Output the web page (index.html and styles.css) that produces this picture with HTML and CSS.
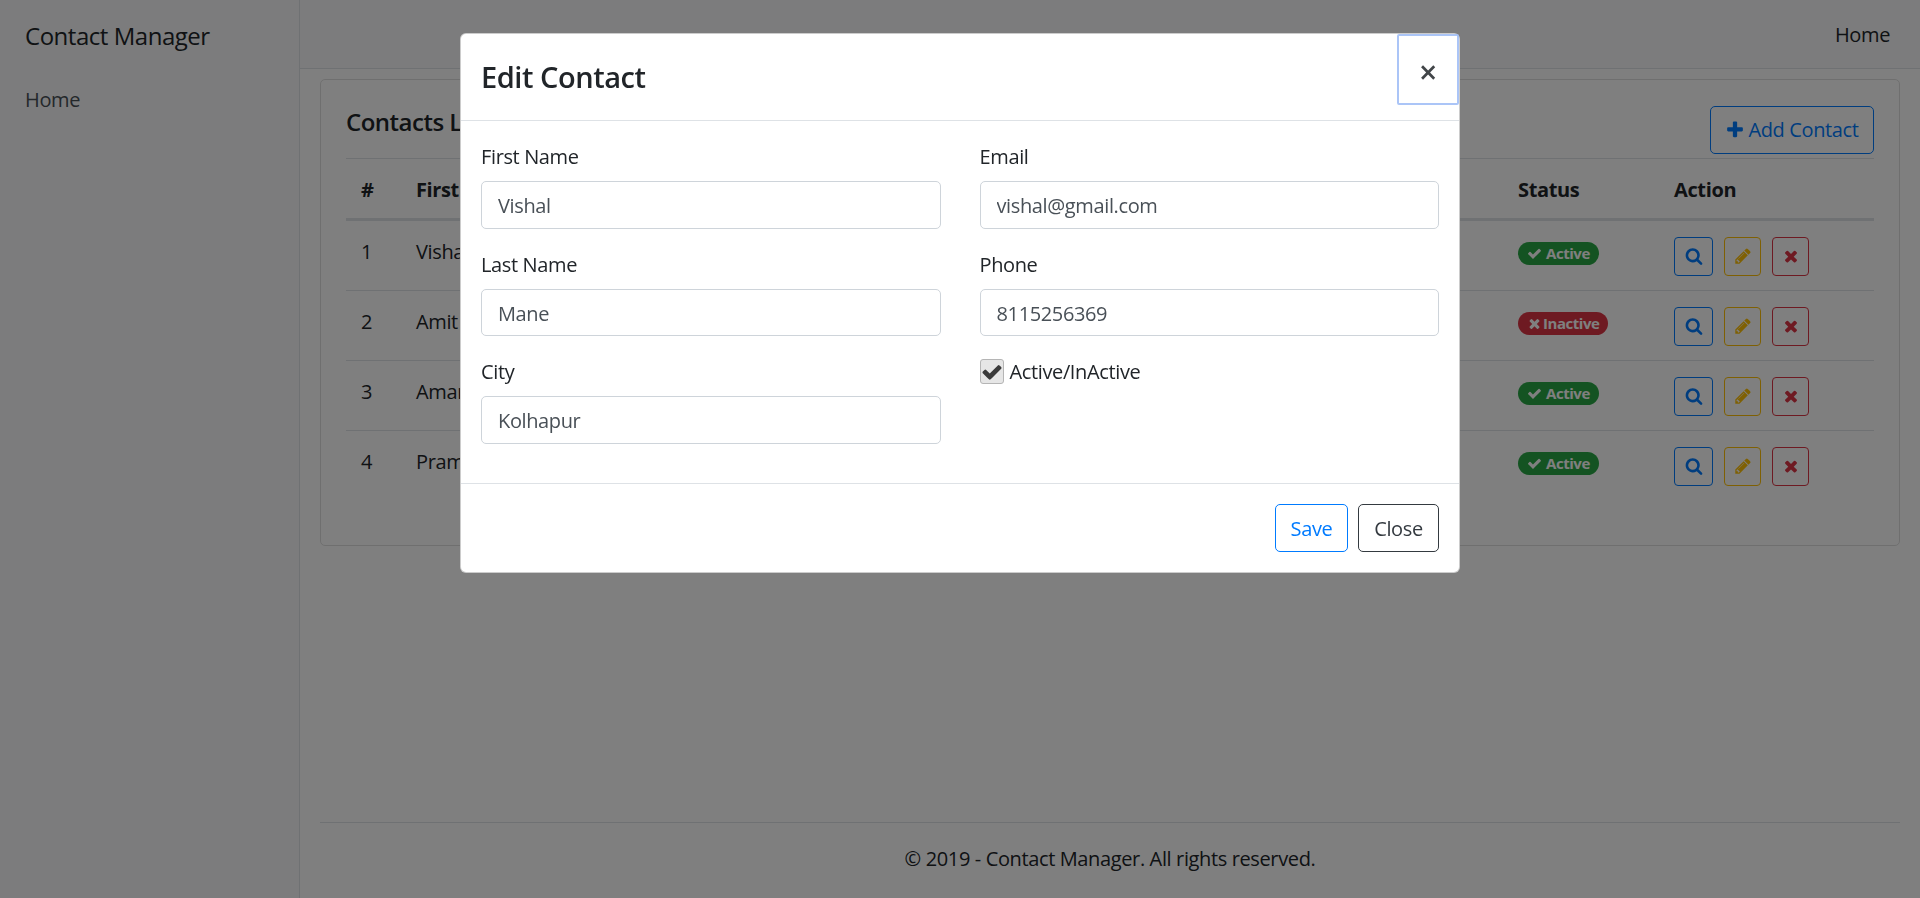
FILE: index.html
```html
<!DOCTYPE html>
<html lang="en">
<head>
<meta charset="utf-8">
<title>Contact Manager</title>
<link rel="stylesheet" href="styles.css">
</head>
<body>
<div class="app">
  <aside class="sidebar">
    <div class="brand">Contact Manager</div>
    <a class="side-link">Home</a>
  </aside>
  <div class="main">
    <header class="topbar"><a class="top-link">Home</a></header>
    <section class="card">
      <div class="card-head">
        <h4 class="card-title">Contacts List</h4>
        <button class="btn btn-add"><svg class="ico ico-plus" viewBox="0 0 1792 1792"><path d="M1600 736v192q0 40-28 68t-68 28h-416v416q0 40-28 68t-68 28h-192q-40 0-68-28t-28-68v-416h-416q-40 0-68-28t-28-68v-192q0-40 28-68t68-28h416v-416q0-40 28-68t68-28h192q40 0 68 28t28 68v416h416q40 0 68 28t28 68z"/></svg>Add Contact</button>
      </div>
      <table class="table">
        <thead>
          <tr><th class="c-num">#</th><th class="c-name">First Name</th><th></th><th class="c-status">Status</th><th class="c-action">Action</th></tr>
        </thead>
        <tbody>
          <tr><td>1</td><td>Vishal</td><td></td><td><span class="badge badge-on"><svg class="ico" viewBox="0 0 1792 1792"><path d="M1671 566q0 40-28 68l-724 724-136 136q-28 28-68 28t-68-28l-136-136-362-362q-28-28-28-68t28-68l136-136q28-28 68-28t68 28l294 295 656-657q28-28 68-28t68 28l136 136q28 28 28 68z"/></svg>Active</span></td><td><div class="actions"><button class="act act-view"><svg class="ico" viewBox="0 0 1792 1792"><path d="M1216 832q0-185-131.5-316.5t-316.5-131.5-316.5 131.5-131.5 316.5 131.5 316.5 316.5 131.5 316.5-131.5 131.5-316.5zm512 832q0 52-38 90t-90 38q-54 0-90-38l-343-342q-179 124-399 124-143 0-273.5-55.5t-225-150-150-225-55.5-273.5 55.5-273.5 150-225 225-150 273.5-55.5 273.5 55.5 225 150 150 225 55.5 273.5q0 220-124 399l343 343q37 37 37 90z"/></svg></button><button class="act act-edit"><svg class="ico" viewBox="0 0 1792 1792"><path d="M491 1536l91-91-235-235-91 91v107h128v128h107zm523-928q0-22-22-22-10 0-17 7l-542 542q-7 7-7 17 0 22 22 22 10 0 17-7l542-542q7-7 7-17zm-54-192l416 416-832 832h-416v-416zm683 96q0 53-37 90l-166 166-416-416 166-165q36-38 90-38 53 0 91 38l235 234q37 39 37 91z"/></svg></button><button class="act act-del"><svg class="ico" viewBox="0 0 1792 1792"><path d="M1490 1322q0 40-28 68l-136 136q-28 28-68 28t-68-28l-294-294-294 294q-28 28-68 28t-68-28l-136-136q-28-28-28-68t28-68l294-294-294-294q-28-28-28-68t28-68l136-136q28-28 68-28t68 28l294 294 294-294q28-28 68-28t68 28l136 136q28 28 28 68t-28 68l-294 294 294 294q28 28 28 68z"/></svg></button></div></td></tr>
          <tr><td>2</td><td>Amit</td><td></td><td><span class="badge badge-off"><svg class="ico" viewBox="0 0 1792 1792"><path d="M1490 1322q0 40-28 68l-136 136q-28 28-68 28t-68-28l-294-294-294 294q-28 28-68 28t-68-28l-136-136q-28-28-28-68t28-68l294-294-294-294q-28-28-28-68t28-68l136-136q28-28 68-28t68 28l294 294 294-294q28-28 68-28t68 28l136 136q28 28 28 68t-28 68l-294 294 294 294q28 28 28 68z"/></svg>Inactive</span></td><td><div class="actions"><button class="act act-view"><svg class="ico" viewBox="0 0 1792 1792"><path d="M1216 832q0-185-131.5-316.5t-316.5-131.5-316.5 131.5-131.5 316.5 131.5 316.5 316.5 131.5 316.5-131.5 131.5-316.5zm512 832q0 52-38 90t-90 38q-54 0-90-38l-343-342q-179 124-399 124-143 0-273.5-55.5t-225-150-150-225-55.5-273.5 55.5-273.5 150-225 225-150 273.5-55.5 273.5 55.5 225 150 150 225 55.5 273.5q0 220-124 399l343 343q37 37 37 90z"/></svg></button><button class="act act-edit"><svg class="ico" viewBox="0 0 1792 1792"><path d="M491 1536l91-91-235-235-91 91v107h128v128h107zm523-928q0-22-22-22-10 0-17 7l-542 542q-7 7-7 17 0 22 22 22 10 0 17-7l542-542q7-7 7-17zm-54-192l416 416-832 832h-416v-416zm683 96q0 53-37 90l-166 166-416-416 166-165q36-38 90-38 53 0 91 38l235 234q37 39 37 91z"/></svg></button><button class="act act-del"><svg class="ico" viewBox="0 0 1792 1792"><path d="M1490 1322q0 40-28 68l-136 136q-28 28-68 28t-68-28l-294-294-294 294q-28 28-68 28t-68-28l-136-136q-28-28-28-68t28-68l294-294-294-294q-28-28-28-68t28-68l136-136q28-28 68-28t68 28l294 294 294-294q28-28 68-28t68 28l136 136q28 28 28 68t-28 68l-294 294 294 294q28 28 28 68z"/></svg></button></div></td></tr>
          <tr><td>3</td><td>Amar</td><td></td><td><span class="badge badge-on"><svg class="ico" viewBox="0 0 1792 1792"><path d="M1671 566q0 40-28 68l-724 724-136 136q-28 28-68 28t-68-28l-136-136-362-362q-28-28-28-68t28-68l136-136q28-28 68-28t68 28l294 295 656-657q28-28 68-28t68 28l136 136q28 28 28 68z"/></svg>Active</span></td><td><div class="actions"><button class="act act-view"><svg class="ico" viewBox="0 0 1792 1792"><path d="M1216 832q0-185-131.5-316.5t-316.5-131.5-316.5 131.5-131.5 316.5 131.5 316.5 316.5 131.5 316.5-131.5 131.5-316.5zm512 832q0 52-38 90t-90 38q-54 0-90-38l-343-342q-179 124-399 124-143 0-273.5-55.5t-225-150-150-225-55.5-273.5 55.5-273.5 150-225 225-150 273.5-55.5 273.5 55.5 225 150 150 225 55.5 273.5q0 220-124 399l343 343q37 37 37 90z"/></svg></button><button class="act act-edit"><svg class="ico" viewBox="0 0 1792 1792"><path d="M491 1536l91-91-235-235-91 91v107h128v128h107zm523-928q0-22-22-22-10 0-17 7l-542 542q-7 7-7 17 0 22 22 22 10 0 17-7l542-542q7-7 7-17zm-54-192l416 416-832 832h-416v-416zm683 96q0 53-37 90l-166 166-416-416 166-165q36-38 90-38 53 0 91 38l235 234q37 39 37 91z"/></svg></button><button class="act act-del"><svg class="ico" viewBox="0 0 1792 1792"><path d="M1490 1322q0 40-28 68l-136 136q-28 28-68 28t-68-28l-294-294-294 294q-28 28-68 28t-68-28l-136-136q-28-28-28-68t28-68l294-294-294-294q-28-28-28-68t28-68l136-136q28-28 68-28t68 28l294 294 294-294q28-28 68-28t68 28l136 136q28 28 28 68t-28 68l-294 294 294 294q28 28 28 68z"/></svg></button></div></td></tr>
          <tr><td>4</td><td>Pramod</td><td></td><td><span class="badge badge-on"><svg class="ico" viewBox="0 0 1792 1792"><path d="M1671 566q0 40-28 68l-724 724-136 136q-28 28-68 28t-68-28l-136-136-362-362q-28-28-28-68t28-68l136-136q28-28 68-28t68 28l294 295 656-657q28-28 68-28t68 28l136 136q28 28 28 68z"/></svg>Active</span></td><td><div class="actions"><button class="act act-view"><svg class="ico" viewBox="0 0 1792 1792"><path d="M1216 832q0-185-131.5-316.5t-316.5-131.5-316.5 131.5-131.5 316.5 131.5 316.5 316.5 131.5 316.5-131.5 131.5-316.5zm512 832q0 52-38 90t-90 38q-54 0-90-38l-343-342q-179 124-399 124-143 0-273.5-55.5t-225-150-150-225-55.5-273.5 55.5-273.5 150-225 225-150 273.5-55.5 273.5 55.5 225 150 150 225 55.5 273.5q0 220-124 399l343 343q37 37 37 90z"/></svg></button><button class="act act-edit"><svg class="ico" viewBox="0 0 1792 1792"><path d="M491 1536l91-91-235-235-91 91v107h128v128h107zm523-928q0-22-22-22-10 0-17 7l-542 542q-7 7-7 17 0 22 22 22 10 0 17-7l542-542q7-7 7-17zm-54-192l416 416-832 832h-416v-416zm683 96q0 53-37 90l-166 166-416-416 166-165q36-38 90-38 53 0 91 38l235 234q37 39 37 91z"/></svg></button><button class="act act-del"><svg class="ico" viewBox="0 0 1792 1792"><path d="M1490 1322q0 40-28 68l-136 136q-28 28-68 28t-68-28l-294-294-294 294q-28 28-68 28t-68-28l-136-136q-28-28-28-68t28-68l294-294-294-294q-28-28-28-68t28-68l136-136q28-28 68-28t68 28l294 294 294-294q28-28 68-28t68 28l136 136q28 28 28 68t-28 68l-294 294 294 294q28 28 28 68z"/></svg></button></div></td></tr>
        </tbody>
      </table>
    </section>
    <footer class="footer">© 2019 - Contact Manager. All rights reserved.</footer>
  </div>
</div>

<div class="backdrop"></div>

<div class="modal">
  <div class="modal-head">
    <h5 class="modal-title">Edit Contact</h5>
    <button class="modal-close">×</button>
  </div>
  <form class="modal-body">
    <div class="field"><label class="label">First Name</label><input class="input" value="Vishal"></div>
    <div class="field"><label class="label">Email</label><input class="input" value="vishal@gmail.com"></div>
    <div class="field"><label class="label">Last Name</label><input class="input" value="Mane"></div>
    <div class="field"><label class="label">Phone</label><input class="input" value="8115256369"></div>
    <div class="field"><label class="label">City</label><input class="input" value="Kolhapur"></div>
    <div class="field"><label class="check"><span class="check-box"><svg class="check-mark" viewBox="0 0 1792 1792"><path d="M1671 566q0 40-28 68l-724 724-136 136q-28 28-68 28t-68-28l-136-136-362-362q-28-28-28-68t28-68l136-136q28-28 68-28t68 28l294 295 656-657q28-28 68-28t68 28l136 136q28 28 28 68z"/></svg></span>Active/InActive</label></div>
  </form>
  <div class="modal-foot">
    <button class="btn btn-save">Save</button>
    <button class="btn btn-cancel">Close</button>
  </div>
</div>
</body>
</html>
```

FILE: styles.css
```css
* { box-sizing: border-box; }
html, body { margin: 0; height: 100%; }
body {
  font-family: "Open Sans", "Noto Sans", "Liberation Sans", sans-serif;
  font-size: 20px;
  letter-spacing: -.37px;
  line-height: 30px;
  color: #212529;
  background: #fff;
  overflow: hidden;
}
button, input { font: inherit; letter-spacing: inherit; }

.app { display: flex; height: 898px; }
.sidebar {
  width: 300px;
  flex: none;
  background: #f8f9fa;
  border-right: 1px solid #dee2e6;
  padding: 17px 25px;
}
.brand { font-size: 24px; line-height: 38px; margin-bottom: 30px; letter-spacing: -.47px; }
.side-link { display: block; color: #495057; }

.main { flex: 1; display: flex; flex-direction: column; min-width: 0; }
.topbar {
  height: 69px;
  flex: none;
  background: #f8f9fa;
  border-bottom: 1px solid #dee2e6;
  display: flex;
  justify-content: flex-end;
  padding: 20px 30px 0 0;
}
.card {
  margin: 10px 20px 0;
  height: 467px;
  border: 1px solid #dfdfdf;
  border-radius: 5px;
  padding: 25px 25px 0;
}
.card-head { display: flex; justify-content: space-between; align-items: flex-start; height: 53px; }
.card-title { margin: 0; font-size: 24px; line-height: 34px; font-weight: 600; letter-spacing: -.5px; }

.btn {
  height: 48px;
  padding: 0 16px;
  background: #fff;
  border: 1px solid #007bff;
  border-radius: 5px;
  color: #007bff;
}
.btn-add { display: flex; align-items: center; gap: 3px; width: 164px; justify-content: center; padding: 0; margin-top: 1px; }
.ico { fill: currentColor; display: block; }
.ico-plus { width: 20px; height: 20px; }

.table { width: 100%; border-collapse: collapse; table-layout: fixed; }
.table th { text-align: left; padding: 16px 15px 13px; font-weight: 700; border-top: 1px solid #dee2e6; border-bottom: 3px solid #dee2e6; height: 60px; }
.table td { padding: 16px 15px 14px; height: 70px; border-top: 1px solid #dee2e6; vertical-align: top; }
.table tbody tr:first-child td { border-top: 0; height: 71px; }
.c-num { width: 55px; }
.c-name { width: 200px; }
.c-status { width: 156px; }
.c-action { width: 215px; }

.badge {
  display: inline-flex;
  align-items: center;
  gap: 4px;
  height: 23px;
  padding: 0 9px;
  border-radius: 12px;
  color: #fff;
  font-size: 15px;
  font-weight: 700;
  line-height: 23px;
  letter-spacing: -.45px;
  margin-top: 5px;
  vertical-align: top;
}
.badge .ico { width: 15px; height: 15px; }
.badge-on { background: #28a745; }
.badge-off { background: #dc3545; gap: 1px; }

.actions { display: flex; gap: 11px; margin-top: -.5px; }
.act {
  width: 37px;
  height: 39px;
  padding: 0;
  background: #fff;
  border: 1px solid;
  border-radius: 4px;
  display: flex;
  align-items: center;
  justify-content: center;
}
.act .ico { width: 18px; height: 18px; }
.act-view { width: 39px; color: #007bff; }
.act-edit { color: #ffc107; }
.act-del { color: #dc3545; }

.footer {
  margin: auto 20px 0;
  height: 76px;
  border-top: 1px solid #dee2e6;
  text-align: center;
  padding-top: 21px;
}

.backdrop { position: fixed; inset: 0; background: rgba(0, 0, 0, .5); }

.modal {
  position: fixed;
  top: 33px;
  left: 460px;
  width: 1000px;
  height: 540px;
  background: #fff;
  border: 1px solid rgba(0, 0, 0, .2);
  border-radius: 6px;
  display: flex;
  flex-direction: column;
}
.modal-head {
  height: 87px;
  flex: none;
  border-bottom: 1px solid #dee2e6;
  display: flex;
  justify-content: space-between;
  align-items: flex-start;
  padding-left: 20px;
}
.modal-title { margin: 24px 0 0; font-size: 29px; line-height: 38px; font-weight: 600; letter-spacing: -.45px; }
.modal-close {
  width: 62px;
  height: 71px;
  padding: 4px 0 0;
  background: none;
  border: 2px solid #9dbcf6;
  border-radius: 2px;
  font-size: 32px;
  font-weight: 600;
  line-height: 1;
  color: #212529;
  opacity: .85;
}
.modal-body {
  height: 362px;
  flex: none;
  padding: 21px 20px 0;
  display: grid;
  grid-template-columns: 459.5px 459.5px;
  column-gap: 39px;
  grid-auto-rows: 107.5px;
  align-content: start;
}
.label { display: block; height: 39px; color: #212529; }
.input {
  display: block;
  width: 100%;
  height: 47.5px;
  padding: 2px 16px 0;
  border: 1px solid #ced4da;
  border-radius: 5px;
  color: #495057;
  background: #fff;
  outline: none;
}
.check { display: flex; gap: 6px; align-items: flex-start; }
.check-box {
  width: 24px;
  height: 25px;
  margin-top: 2px;
  flex: none;
  background: #e6e6e6;
  border: 1px solid #b5b5b5;
  border-radius: 3px;
  display: flex;
  align-items: center;
  justify-content: center;
}
.check-mark { width: 22px; height: 22px; fill: #3b3b3b; display: block; }
.modal-foot {
  flex: 1;
  border-top: 1px solid #dee2e6;
  display: flex;
  justify-content: flex-end;
  gap: 10px;
  padding: 20px 20px 0;
}
.btn-save { width: 73px; padding: 2px 0 0; }
.btn-cancel { width: 81px; padding: 2px 0 0; border-color: #343a40; color: #343a40; }
```
